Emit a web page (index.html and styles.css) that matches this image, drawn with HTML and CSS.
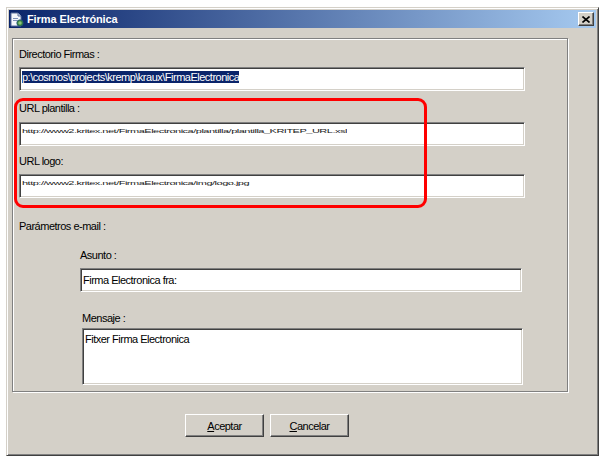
FILE: index.html
```html
<!DOCTYPE html>
<html lang="es">
<head>
    <meta charset="UTF-8">
    <title>Firma Electrónica</title>
    <link rel="stylesheet" href="styles.css">
</head>
<body>
    <div class="window">
        <div class="titlebar">
            <svg class="app-icon" width="14" height="15" viewBox="0 0 14 15">
                <path d="M1 1h7l3 3v10H1z" fill="#f4f6fb" stroke="#5a6f9c"/>
                <path d="M8 1v3h3" fill="#c9d4ea" stroke="#5a6f9c"/>
                <rect x="3" y="6" width="5" height="1" fill="#7d8fb8"/>
                <rect x="3" y="8" width="4" height="1" fill="#7d8fb8"/>
                <circle cx="10" cy="11" r="3.2" fill="#3d8a3a" stroke="#1d4f7a" stroke-width="0.8"/>
                <path d="M8.2 11h3.6M10 9.2v3.6" stroke="#b9e3a8" stroke-width="0.8"/>
            </svg>
            <span class="title">Firma Electrónica</span>
            <span class="close-btn">
                <svg width="8" height="7" viewBox="0 0 8 7">
                    <path d="M0.5 0.5l7 6M7.5 0.5l-7 6" stroke="#000" stroke-width="1.6"/>
                </svg>
            </span>
        </div>

        <div class="content">
            <div class="group">
                <div class="label first">Directorio Firmas :</div>
                <div class="textbox wide"><span class="selected">p:\cosmos\projects\kremp\kraux\FirmaElectronica</span></div>

                <div class="label gap-10">URL plantilla :</div>
                <div class="textbox wide gap-7"><span class="squashed">http://www2.kritex.net/FirmaElectronica/plantilla/plantilla_KRITEP_URL.xsl</span></div>

                <div class="label gap-8">URL logo:</div>
                <div class="textbox wide"><span class="squashed">http://www2.kritex.net/FirmaElectronica/img/logo.jpg</span></div>

                <div class="label section">Parámetros e-mail :</div>

                <div class="label sub asunto">Asunto :</div>
                <div class="textbox subject">Firma Electronica fra:</div>

                <div class="label sub mensaje">Mensaje :</div>
                <div class="textbox message">Fitxer Firma Electronica</div>

                <div class="highlight"></div>
            </div>

            <div class="buttons">
                <span class="button"><u>A</u>ceptar</span>
                <span class="button"><u>C</u>ancelar</span>
            </div>
        </div>
    </div>
</body>
</html>
```

FILE: styles.css
```css
* {
    margin: 0;
    padding: 0;
    box-sizing: border-box;
}

body {
    background: #fff;
    font-family: "Liberation Sans", Arial, sans-serif;
    font-size: 11px;
    letter-spacing: -0.5px;
    color: #000;
}

.window {
    margin: 7px 0 0 6px;
    width: 593px;
    height: 449px;
    padding: 2px;
    background: #d4d0c8;
    border: 1px solid;
    border-color: #d4d0c8 #404040 #404040 #d4d0c8;
    box-shadow: inset 1px 1px #fff, inset -1px -1px #808080;
}

.titlebar {
    height: 18px;
    display: flex;
    align-items: center;
    padding: 0 2px 0 1px;
    background: linear-gradient(to right, #0a246a, #a6caf0);
}

.app-icon {
    flex: none;
}

.title {
    margin-left: 3px;
    color: #fff;
    font-weight: bold;
    font-size: 11px;
    letter-spacing: -0.1px;
    flex: 1;
}

.close-btn {
    width: 16px;
    height: 14px;
    display: flex;
    justify-content: center;
    align-items: center;
    background: #d4d0c8;
    border: 1px solid;
    border-color: #fff #404040 #404040 #fff;
    box-shadow: inset -1px -1px #808080;
}

.content {
    padding: 10px 0 0 3px;
}

.group {
    position: relative;
    width: 556px;
    height: 354px;
    padding: 0 6px;
    border: 1px solid #808080;
    box-shadow: inset 1px 1px #fff, 1px 1px #fff;
}

.label {
    line-height: 14px;
    height: 14px;
    white-space: nowrap;
}

.label.first { margin-top: 8px; }
.gap-10 { margin-top: 10px; }
.gap-8 { margin-top: 8px; }
.label.section { margin-top: 21px; }
.label.sub { margin-left: 61px; }
.label.asunto { margin-top: 15px; }
.label.mensaje { margin-top: 19px; margin-left: 63px; }

.textbox {
    background: #fff;
    height: 24px;
    padding: 3px 2px 0;
    line-height: 13px;
    white-space: nowrap;
    overflow: hidden;
    border: 1px solid;
    border-color: #808080 #fff #fff #808080;
    box-shadow: inset 1px 1px #404040, inset -1px -1px #d4d0c8;
    margin-top: 6px;
}

.textbox.wide {
    width: 506px;
}

.textbox.gap-7 {
    margin-top: 7px;
}

.textbox.subject {
    width: 442px;
    margin-left: 61px;
    padding-top: 5px;
}

.textbox.message {
    width: 441px;
    height: 57px;
    margin-top: 3px;
    margin-left: 63px;
    padding-top: 4px;
}

.selected {
    background: #0a246a;
    color: #fff;
}

/* the URLs are blurred in the capture, kept readable but flattened */
.squashed {
    display: inline-block;
    margin-top: 1px;
    font-size: 11px;
    line-height: 12px;
    color: #1a1a1a;
    transform: scaleY(0.55);
    transform-origin: top left;
}

.highlight {
    position: absolute;
    left: 1px;
    top: 59px;
    width: 413px;
    height: 110px;
    border: 3px solid #ff0000;
    border-radius: 9px;
    pointer-events: none;
}

.buttons {
    display: flex;
    gap: 6px;
    margin: 22px 0 0 173px;
}

.button {
    width: 79px;
    height: 23px;
    display: flex;
    justify-content: center;
    align-items: center;
    background: #d4d0c8;
    border: 1px solid;
    border-color: #fff #404040 #404040 #fff;
    box-shadow: inset -1px -1px #808080;
}
```
